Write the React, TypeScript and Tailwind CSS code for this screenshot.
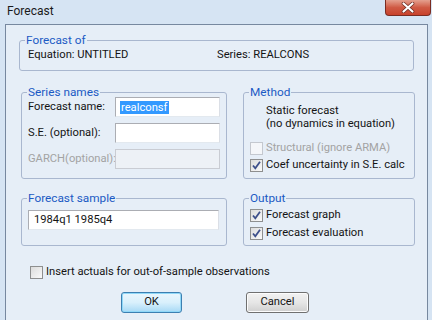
import React from "react";

const font = { fontFamily: "Roboto, 'Liberation Sans', sans-serif" };

function Check({ checked, disabled }: { checked?: boolean; disabled?: boolean }) {
  return (
    <span
      className={
        "flex h-[13px] w-[13px] shrink-0 items-center justify-center border " +
        (disabled ? "border-[#c4c8cf] bg-[#f4f6f9]" : "border-[#8e8f8f] bg-gradient-to-br from-[#dcdcdc] to-[#fafafa]")
      }
    >
      {checked && (
        <svg width="11" height="11" viewBox="0 0 11 11">
          <path d="M2 5.5 L4.3 8.3 L9 1.8" fill="none" stroke="#3d4f8a" strokeWidth="1.8" />
        </svg>
      )}
    </span>
  );
}

function Group({ title, className, children }: { title: string; className: string; children?: React.ReactNode }) {
  return (
    <div className={"relative rounded-[3px] border border-[#a9b7cf] " + className}>
      <span className="absolute left-[5px] top-[-8px] bg-[#e6eef7] px-[1px] text-[11.8px] leading-[14px] text-[#1b5ac4]">
        {title}
      </span>
      {children}
    </div>
  );
}

export default function App() {
  return (
    <div className="h-[320px] w-[432px] overflow-hidden bg-[#d6e4f3] text-[11.2px] text-[#141414]" style={font}>
      <div className="flex h-[24px] items-start justify-between">
        <span className="pl-[7px] pt-[4px] text-[12px] leading-[14px] text-[#1a1a1a]">Forecast</span>
        <div className="mr-[1px] flex h-[16px] w-[46px] items-center justify-center rounded-b-[4px] border border-t-0 border-[#7a2c22] bg-gradient-to-b from-[#e4a08f] via-[#cf5a44] to-[#c8412b]">
          <svg width="14" height="11" viewBox="0 0 14 11">
            <path d="M2.5 1.5 L11.5 9.5 M11.5 1.5 L2.5 9.5" stroke="#6b2a20" strokeWidth="3.6" strokeLinecap="round" />
            <path d="M2.5 1.5 L11.5 9.5 M11.5 1.5 L2.5 9.5" stroke="#ffffff" strokeWidth="2.2" strokeLinecap="round" />
          </svg>
        </div>
      </div>
      <div className="ml-[5px] h-[300px] w-[423px] border border-[#77889f] bg-[#e6eef7]">
        <Group title="Forecast of" className="ml-[13px] mt-[15px] h-[31px] w-[395px]">
          <div className="flex pl-[8px] pt-[7px] leading-[14px]">
            <span className="w-[189px]">Equation: UNTITLED</span>
            <span>Series: REALCONS</span>
          </div>
        </Group>

        <div className="ml-[15px] mt-[21px] flex gap-[16px]">
          <Group title="Series names" className="h-[87px] w-[206px]">
            <div className="flex flex-col gap-[6px] pl-[6px] pt-[4px] leading-[14px]">
              <div className="flex h-[20px] items-center">
                <span className="w-[87px]">Forecast name:</span>
                <div className="flex h-[20px] w-[105px] items-center border border-[#abadb3] border-b-[#e3e9ef] border-r-[#dbdfe6] bg-white pl-[4px]">
                  <span className="bg-[#3399ff] px-[1px] text-white leading-[13px]">realconsf</span>
                </div>
              </div>
              <div className="flex h-[20px] items-center">
                <span className="w-[87px]">S.E. (optional):</span>
                <div className="h-[20px] w-[105px] border border-[#abadb3] border-b-[#e3e9ef] border-r-[#dbdfe6] bg-white" />
              </div>
              <div className="flex h-[20px] items-center">
                <span className="w-[87px] text-[#a3a3a3]">GARCH(optional):</span>
                <div className="h-[20px] w-[105px] border border-[#c9ccd3] bg-[#edf1f6]" />
              </div>
            </div>
          </Group>
          <Group title="Method" className="h-[87px] w-[172px]">
            <div className="flex flex-col pl-[6px] pt-[11px]">
              <div className="pl-[16px] leading-[13px]">
                <div>Static forecast</div>
                <div>(no dynamics in equation)</div>
              </div>
              <div className="mt-[11px] flex h-[14px] items-center gap-[3px] text-[#a3a3a3]">
                <Check disabled />
                <span>Structural (ignore ARMA)</span>
              </div>
              <div className="mt-[3px] flex h-[14px] items-center gap-[3px]">
                <Check checked />
                <span>Coef uncertainty in S.E. calc</span>
              </div>
            </div>
          </Group>
        </div>

        <div className="ml-[15px] mt-[19px] flex gap-[16px]">
          <Group title="Forecast sample" className="h-[48px] w-[206px]">
            <div className="pl-[6px] pt-[11px]">
              <div className="flex h-[20px] w-[191px] items-center border border-[#abadb3] border-b-[#e3e9ef] border-r-[#dbdfe6] bg-white pl-[5px] leading-[14px]">
                1984q1 1985q4
              </div>
            </div>
          </Group>
          <Group title="Output" className="h-[48px] w-[172px]">
            <div className="flex flex-col gap-[4px] pl-[6px] pt-[9px]">
              <div className="flex h-[14px] items-center gap-[3px]">
                <Check checked />
                <span>Forecast graph</span>
              </div>
              <div className="flex h-[14px] items-center gap-[3px]">
                <Check checked />
                <span>Forecast evaluation</span>
              </div>
            </div>
          </Group>
        </div>

        <div className="ml-[24px] mt-[19px] flex h-[14px] items-center gap-[3px]">
          <Check />
          <span>Insert actuals for out-of-sample observations</span>
        </div>

        <div className="mt-[13px] flex">
          <button className="ml-[115px] flex h-[21px] w-[61px] items-center justify-center rounded-[3px] border border-[#3c7fb1] bg-gradient-to-b from-[#eaf6fd] via-[#d9f0fc] to-[#a7d9f5] shadow-[inset_0_0_0_1px_#90d8f8]">
            OK
          </button>
          <button className="ml-[64px] flex h-[21px] w-[63px] items-center justify-center rounded-[3px] border border-[#707070] bg-gradient-to-b from-[#f2f2f2] via-[#e6e6e6] to-[#cfcfcf] shadow-[inset_0_0_0_1px_#fcfcfc]">
            Cancel
          </button>
        </div>
      </div>
    </div>
  );
}
